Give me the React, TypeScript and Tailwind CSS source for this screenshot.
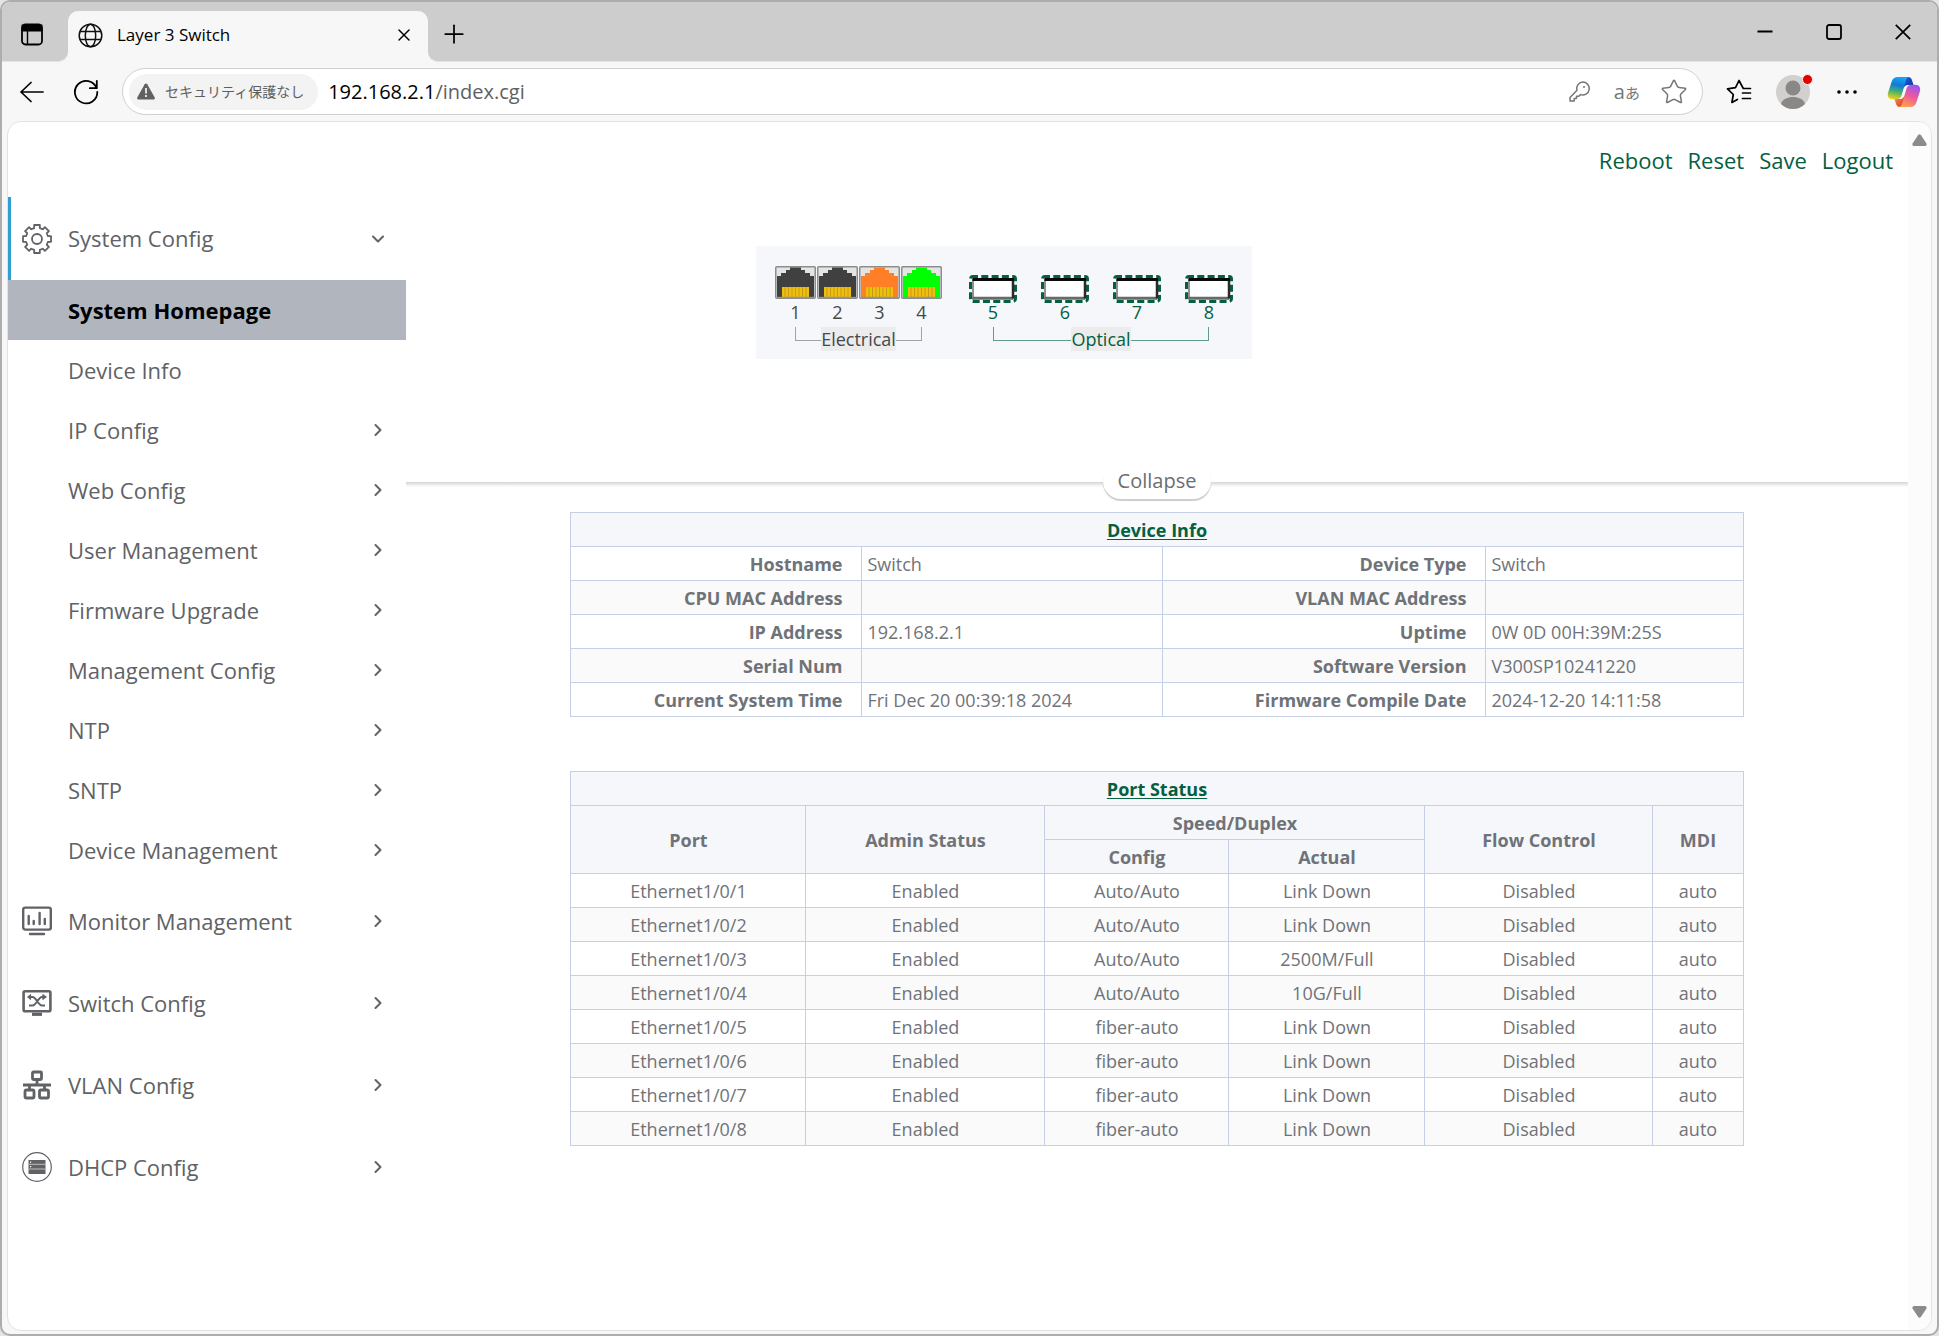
import React from "react";
import { ChevronDown, ChevronRight, Plus, Star, X } from "lucide-react";

const GearIcon = () => {
  const points: string[] = [];
  for (let i = 0; i < 8; i++) {
    const a = (i * Math.PI) / 4 - Math.PI / 2;
    const at = (r: number, d: number) =>
      `${(15 + r * Math.cos(a + d)).toFixed(2)},${(15 + r * Math.sin(a + d)).toFixed(2)}`;
    points.push(at(11.3, -0.25), at(14.3, -0.2), at(14.3, 0.2), at(11.3, 0.25));
  }
  return (
    <svg width="30" height="30" viewBox="0 0 30 30" fill="none" stroke="currentColor" strokeWidth="1.8" strokeLinejoin="round">
      <polygon points={points.join(" ")} />
      <circle cx="15" cy="15" r="5" />
    </svg>
  );
};

const MonitorIcon = () => (
  <svg width="30" height="30" viewBox="0 0 30 30" fill="none" stroke="currentColor" strokeWidth="2.4" strokeLinecap="round">
    <rect x="1.2" y="1.6" width="27.6" height="22" rx="2" />
    <path d="M6.7 10v8M11.7 15v3M17.6 7v11M22.8 13v5M8 28h14" />
  </svg>
);

const SwitchIcon = () => (
  <svg width="30" height="30" viewBox="0 0 30 30" fill="none" stroke="currentColor" strokeWidth="2">
    <rect x="1.6" y="3.2" width="26.8" height="20" rx="1.5" strokeWidth="2.6" />
    <path d="M10 26.3h10" strokeWidth="3.2" />
    <path d="M7 9h3.5c4 0 5.500 8.500 9.500 8.500h3M7 17.500h3.500c4 0 5.500-8.500 9.500-8.500h2" />
    <path d="M20.500 6.500 24 9l-3.500 2.500M9 6.500 6 9l3 2.500" strokeWidth="1.200" fill="currentColor" />
  </svg>
);

const VlanIcon = () => (
  <svg width="30" height="30" viewBox="0 0 30 30" fill="none" stroke="currentColor" strokeWidth="2.800">
    <rect x="10.500" y="2" width="9" height="7.500" rx="1" />
    <path d="M15 9.500v5M1 15h28M7.500 15v5M22.500 15v5" />
    <rect x="3" y="20" width="9" height="8" rx="1.500" />
    <rect x="17.500" y="20" width="9" height="8" rx="1.500" />
  </svg>
);

const DhcpIcon = () => (
  <svg width="30" height="30" viewBox="0 0 30 30" fill="none">
    <circle cx="15" cy="15" r="14.300" stroke="currentColor" strokeWidth="1.200" />
    <path d="M6.500 8h17v14h-17z" fill="currentColor" />
    <path d="M6.500 12.300h17M6.500 17h17" stroke="#c9c9c9" strokeWidth="0.900" />
    <path d="M8 10.200h1.200M8 14.700h1.200" stroke="#ffffff" strokeWidth="1.200" />
  </svg>
);

const CopilotIcon = () => (
  <svg width="34" height="32" viewBox="0 0 34 32">
    <defs>
      <linearGradient id="cpA" x1="0.500" y1="0" x2="0.300" y2="1">
        <stop offset="0" stopColor="#18a6ee" />
        <stop offset="0.350" stopColor="#1279dc" />
        <stop offset="0.650" stopColor="#45b36b" />
        <stop offset="1" stopColor="#f3d01c" />
      </linearGradient>
      <linearGradient id="cpB" x1="0.700" y1="0" x2="0.300" y2="1">
        <stop offset="0" stopColor="#9b55f0" />
        <stop offset="0.500" stopColor="#ee5a9c" />
        <stop offset="1" stopColor="#ffa24a" />
      </linearGradient>
      <linearGradient id="cpC" x1="0" y1="0" x2="1" y2="1">
        <stop offset="0" stopColor="#1b5fd8" />
        <stop offset="1" stopColor="#1134a8" />
      </linearGradient>
      <linearGradient id="cpD" x1="0" y1="0" x2="1" y2="1">
        <stop offset="0" stopColor="#f8a23a" />
        <stop offset="1" stopColor="#d92c3c" />
      </linearGradient>
    </defs>
    <path d="M17 1h4c2.500 0 3.500 1.500 4.100 3.500L26.500 9H21c-2.500 0-3.800 1.500-4.500 4z" fill="url(#cpC)" />
    <path d="M17 31h-4c-2.500 0-3.500-1.500-4.100-3.500L7.500 23H13c2.500 0 3.800-1.500 4.500-4z" fill="url(#cpD)" />
    <path d="M11 1h11c-1.800.5-2.700 2-3.300 4l-4.200 14.500C13.700 22 12 23.300 9.500 23.300H5.500C1.500 23.300 0 20 1.200 16.200L4.500 6C5.600 2.700 7.500 1 11 1z" fill="url(#cpA)" />
    <path d="M23 31H12c1.800-.5 2.700-2 3.300-4l4.200-14.500C20.300 10 22 8.700 24.500 8.700h4C32.500 8.700 34 12 32.800 15.800L29.500 26C28.400 29.300 26.500 31 23 31z" fill="url(#cpB)" />
  </svg>
);

const JackIcon = ({ fill }: { fill: string }) => (
  <svg width="41" height="33" viewBox="0 0 41 33">
    <rect x="0.750" y="0.750" width="39.500" height="31.500" rx="1" fill="#e4e4e4" stroke="#8d8d90" strokeWidth="1.500" />
    <path d="M2 31V10h4V7h5V4h4V1.500h11V4h4v3h5v3h4v21z" fill={fill} />
    <path d="M7 21h27v10H7z" fill="#edc010" />
    <path d="M10 21v10M13.500 21v10M17 21v10M20.500 21v10M24 21v10M27.500 21v10M31 21v10" stroke="#c99a10" strokeWidth="1" />
    <path d="M2 31.300h37" stroke="#8d8d90" />
  </svg>
);

const SfpIcon = () => (
  <svg width="48" height="28" viewBox="0 0 48 28" fill="none">
    <rect x="1.500" y="1.500" width="45" height="25" rx="2.500" stroke="#04603f" strokeWidth="3" strokeDasharray="7 3.300" strokeDashoffset="2" />
    <rect x="3" y="3" width="42" height="22" rx="1" fill="#ffffff" />
    <path d="M4 3.500v21" stroke="#6d6d6d" strokeWidth="1.500" />
    <path d="M3.500 23.300h41" stroke="#6a6a6a" strokeWidth="3" />
    <path d="M44 3.500v20" stroke="#2a2a2a" strokeWidth="2.500" />
    <path d="M3.500 4.500h41.500" stroke="#0a0a0a" strokeWidth="3" />
  </svg>
);

const subItems = [
  "System Homepage",
  "Device Info",
  "IP Config",
  "Web Config",
  "User Management",
  "Firmware Upgrade",
  "Management Config",
  "NTP",
  "SNTP",
  "Device Management",
];

const sections = [
  { label: "Monitor Management", icon: <MonitorIcon /> },
  { label: "Switch Config", icon: <SwitchIcon /> },
  { label: "VLAN Config", icon: <VlanIcon /> },
  { label: "DHCP Config", icon: <DhcpIcon /> },
];

const deviceRows = [
  ["Hostname", "Switch", "Device Type", "Switch"],
  ["CPU MAC Address", "", "VLAN MAC Address", ""],
  ["IP Address", "192.168.2.1", "Uptime", "0W 0D 00H:39M:25S"],
  ["Serial Num", "", "Software Version", "V300SP10241220"],
  ["Current System Time", "Fri Dec 20 00:39:18 2024", "Firmware Compile Date", "2024-12-20 14:11:58"],
];

const portRows = [
  ["Auto/Auto", "Link Down"],
  ["Auto/Auto", "Link Down"],
  ["Auto/Auto", "2500M/Full"],
  ["Auto/Auto", "10G/Full"],
  ["fiber-auto", "Link Down"],
  ["fiber-auto", "Link Down"],
  ["fiber-auto", "Link Down"],
  ["fiber-auto", "Link Down"],
].map(([config, actual], i) => [`Ethernet1/0/${i + 1}`, "Enabled", config, actual, "Disabled", "auto"]);

const jackColors = ["#404040", "#404040", "#ff7f27", "#00ff00"];

function TitleBar() {
  return (
    <div className="flex h-[60px] shrink-0">
      <div className="flex w-[66px] items-center rounded-br-[10px] border-b border-[#e2e2e2] bg-[#cdcdcd] pt-[6px] pl-[19px]">
        <button aria-label="Tab actions">
          <svg width="22" height="23" viewBox="0 0 22 23" fill="none" stroke="#000" strokeWidth="1.800">
            <rect x="1" y="1.500" width="20" height="20" rx="3.500" />
            <path d="M1.500 2.500h19v5h-19z" fill="#000" />
            <path d="M6.500 7v14" strokeWidth="1.400" />
          </svg>
        </button>
      </div>
      <div className="w-[360px] bg-[#cdcdcd] pt-[9px]">
        <div className="flex h-full items-center rounded-t-[10px] bg-[#f7f7f7] pr-[14px] pb-[3px] pl-[10px]">
          <svg width="25" height="25" viewBox="0 0 25 25" fill="none" stroke="#111" strokeWidth="1.500">
            <circle cx="12.500" cy="12.500" r="11.300" />
            <ellipse cx="12.500" cy="12.500" rx="5.200" ry="11.300" />
            <path d="M2 8.500h21M2 16.500h21" />
          </svg>
          <span className="ml-[14px] flex-1 text-[17px] text-black">Layer 3 Switch</span>
          <button aria-label="Close tab">
            <X size={20} strokeWidth={1.800} color="#000" />
          </button>
        </div>
      </div>
      <div className="flex flex-1 items-center rounded-bl-[10px] border-b border-[#e2e2e2] bg-[#cdcdcd] pr-[26px] pl-[11px]">
        <button aria-label="New tab" className="mt-[4px] mr-auto">
          <Plus size={30} strokeWidth={1.400} color="#000" />
        </button>
        <div className="flex items-center gap-[53px]">
          <button aria-label="Minimize">
            <svg width="16" height="16" viewBox="0 0 16 16" stroke="#000" strokeWidth="1.800">
              <path d="M0.500 7.500h15" />
            </svg>
          </button>
          <button aria-label="Maximize">
            <svg width="16" height="16" viewBox="0 0 16 16" fill="none" stroke="#000" strokeWidth="1.800">
              <rect x="1" y="1" width="14" height="14" rx="2" />
            </svg>
          </button>
          <button aria-label="Close window">
            <svg width="16" height="16" viewBox="0 0 16 16" stroke="#000" strokeWidth="1.800">
              <path d="M0.800 0.800 15.200 15.200M15.200 0.800 0.800 15.200" />
            </svg>
          </button>
        </div>
      </div>
    </div>
  );
}

function Toolbar() {
  return (
    <div className="flex h-[59px] shrink-0 items-center pr-[16px] pl-[18px]">
      <button aria-label="Back">
        <svg width="24" height="22" viewBox="0 0 24 22" fill="none" stroke="#000" strokeWidth="1.700" strokeLinecap="round" strokeLinejoin="round">
          <path d="M11 1.500 1 11l10 9.500M1 11h22" />
        </svg>
      </button>
      <button aria-label="Refresh" className="ml-[29px]">
        <svg width="26" height="26" viewBox="0 0 26 26" fill="none" stroke="#000" strokeWidth="1.800" strokeLinecap="round" strokeLinejoin="round">
          <path d="M23.500 9A11.200 11.200 0 1 0 24.300 13M23.800 2v7.200h-7" />
        </svg>
      </button>
      <div className="ml-[23px] flex h-[47px] flex-1 items-center rounded-full border border-[#cfcfcf] bg-white pr-[14px] pl-[6px]">
        <button className="flex h-[36px] items-center gap-[10px] rounded-full bg-[#f3f3f3] pr-[14px] pl-[8px] text-[14px] text-[#5e5e5e]">
          <svg width="18" height="17" viewBox="0 0 18 17">
            <path d="M9 0.500c.6 0 1 .3 1.300.8l7.300 13c.6 1.100 0 2.200-1.200 2.200H1.600C.4 16.500-.2 15.400.4 14.300l7.300-13C8 .8 8.400.5 9 .5z" fill="#616161" />
            <path d="M9 5v5.500" stroke="#fff" strokeWidth="1.600" />
            <circle cx="9" cy="13" r="1.100" fill="#fff" />
          </svg>
          <span>セキュリティ保護なし</span>
        </button>
        <button className="mr-auto ml-[10px] text-[20px] text-[#5f5f5f]">
          <span className="text-black">192.168.2.1</span>/index.cgi
        </button>
        <button aria-label="Passwords">
          <svg width="21" height="21" viewBox="0 0 21 21" fill="none" stroke="#767676" strokeWidth="1.500" strokeLinejoin="round">
            <path d="M13.500 1a6.500 6.500 0 1 1-2 12.600L9.800 15.300H7.500v2.300H5.200V20H1v-3.600l7-7.200A6.500 6.500 0 0 1 13.500 1z" />
            <circle cx="15" cy="6" r="1" fill="#767676" stroke="none" />
          </svg>
        </button>
        <button aria-label="Translate" className="ml-[24px] text-[#767676]">
          <span className="text-[20px]">a</span>
          <span className="text-[15px]">あ</span>
        </button>
        <button aria-label="Add to favorites" className="ml-[20px]">
          <Star size={28} strokeWidth={1.300} color="#767676" />
        </button>
      </div>
      <button aria-label="Favorites" className="ml-[23px]">
        <svg width="26" height="25" viewBox="0 0 26 25" fill="none" stroke="#000" strokeWidth="1.700" strokeLinejoin="round" strokeLinecap="round">
          <path d="M24.500 9.500h-7.200L13 1.500 9.500 8.700 1.500 9.800l5.800 5.700-1.400 8 5.500-3M16.500 14h8M16.500 19.500h8" />
        </svg>
      </button>
      <button aria-label="Profile" className="relative ml-[24px]">
        <svg width="34" height="34" viewBox="0 0 34 34">
          <circle cx="17" cy="17" r="17" fill="#d2d0ce" />
          <circle cx="17" cy="13" r="7.500" fill="#8a8886" />
          <path d="M5 29c1.500-5 6.500-7 12-7s10.500 2 12 7a17 17 0 0 1-24 0z" fill="#8a8886" />
        </svg>
        <span className="absolute -top-px -right-[3px] size-[11px] rounded-full border border-[#f7f7f7] bg-[#e60000]" />
      </button>
      <button aria-label="Settings and more" className="ml-[27px]">
        <svg width="20" height="20" viewBox="0 0 20 20">
          <circle cx="2" cy="10" r="1.800" />
          <circle cx="10" cy="10" r="1.800" />
          <circle cx="18" cy="10" r="1.800" />
        </svg>
      </button>
      <button aria-label="Copilot" className="ml-[30px]">
        <CopilotIcon />
      </button>
    </div>
  );
}

function Sidebar() {
  return (
    <nav className="w-[398px] shrink-0 text-[22px] text-[#606266]">
      <button className="flex h-[83px] w-full items-center border-l-[3px] border-[#2e9fd0] pr-[18px] pl-[11px]">
        <GearIcon />
        <span className="ml-[16px] flex-1 text-left">System Config</span>
        <ChevronDown size={20} strokeWidth={2.400} />
      </button>
      <ul>
        {subItems.map((item, i) => (
          <li key={item}>
            <a
              href="#"
              className={
                i === 0
                  ? "flex h-[60px] items-center bg-[#b1b6be] pr-[18px] pl-[60px] font-bold text-black"
                  : "flex h-[60px] items-center pr-[18px] pl-[60px]"
              }
            >
              <span className="flex-1">{item}</span>
              {i > 1 && <ChevronRight size={20} strokeWidth={2.400} />}
            </a>
          </li>
        ))}
      </ul>
      {sections.map((s) => (
        <button key={s.label} className="flex h-[82px] w-full items-center pr-[18px] pl-[14px]">
          {s.icon}
          <span className="ml-[16px] flex-1 text-left">{s.label}</span>
          <ChevronRight size={20} strokeWidth={2.400} />
        </button>
      ))}
    </nav>
  );
}

function PortPanel() {
  return (
    <div className="ml-[350px] flex w-[496px] items-end justify-between bg-[#f5f7fb] px-[19px] pt-[20px] pb-[8px] text-[18px]">
      <div className="text-[#45484d]">
        <div className="flex gap-px">
          {jackColors.map((c, i) => (
            <button key={i} className="flex flex-col items-center">
              <JackIcon fill={c} />
              <span className="mt-[4px] leading-[18px]">{i + 1}</span>
            </button>
          ))}
        </div>
        <div className="mx-[20px] mt-[6px] flex">
          <div className="h-[14px] flex-1 border-b border-l border-[#a0a3a8]" />
          <span className="bg-[#ececec] leading-[24px]">Electrical</span>
          <div className="h-[14px] flex-1 border-r border-b border-[#a0a3a8]" />
        </div>
      </div>
      <div className="text-[#04603f]">
        <div className="flex gap-[24px]">
          {[5, 6, 7, 8].map((n) => (
            <button key={n} className="flex flex-col items-center">
              <SfpIcon />
              <span className="leading-[18px]">{n}</span>
            </button>
          ))}
        </div>
        <div className="mx-[24px] mt-[6px] flex">
          <div className="h-[14px] flex-1 border-b border-l border-[#5f9c83]" />
          <span className="bg-[#ececec] leading-[24px]">Optical</span>
          <div className="h-[14px] flex-1 border-r border-b border-[#5f9c83]" />
        </div>
      </div>
    </div>
  );
}

const cell = "h-[34px] border border-[#c5d0e6] p-0";

function DeviceTable() {
  return (
    <table className="w-[78%] table-fixed border-collapse text-[18px] leading-[24px] text-[#6f7378]">
      <colgroup>
        <col className="w-[291px]" />
        <col className="w-[301px]" />
        <col className="w-[323px]" />
        <col className="w-[257px]" />
      </colgroup>
      <thead>
        <tr className="bg-[#f5f7fb]">
          <th colSpan={4} className={cell}>
            <a href="#" className="font-bold text-[#04603f] underline underline-offset-2">Device Info</a>
          </th>
        </tr>
      </thead>
      <tbody>
        {deviceRows.map((r) => (
          <tr key={r[0]} className="even:bg-[#fafafa]">
            {r.map((v, i) =>
              i % 2 === 0 ? (
                <th key={i} scope="row" className="h-[34px] border border-[#c5d0e6] py-0 pr-[19px] text-right font-bold">{v}</th>
              ) : (
                <td key={i} className="h-[34px] border border-[#c5d0e6] py-0 pl-[5px]">{v}</td>
              ),
            )}
          </tr>
        ))}
      </tbody>
    </table>
  );
}

function PortTable() {
  return (
    <table className="w-[78%] table-fixed border-collapse text-center text-[18px] leading-[24px] text-[#6f7378]">
      <colgroup>
        <col className="w-[235px]" />
        <col className="w-[239px]" />
        <col className="w-[184px]" />
        <col className="w-[196px]" />
        <col className="w-[228px]" />
        <col className="w-[90px]" />
      </colgroup>
      <thead className="bg-[#f5f7fb]">
        <tr>
          <th colSpan={6} className={cell}>
            <a href="#" className="font-bold text-[#04603f] underline underline-offset-2">Port Status</a>
          </th>
        </tr>
        <tr>
          <th rowSpan={2} className={cell}>Port</th>
          <th rowSpan={2} className={cell}>Admin Status</th>
          <th colSpan={2} className={cell}>Speed/Duplex</th>
          <th rowSpan={2} className={cell}>Flow Control</th>
          <th rowSpan={2} className={cell}>MDI</th>
        </tr>
        <tr>
          <th className={cell}>Config</th>
          <th className={cell}>Actual</th>
        </tr>
      </thead>
      <tbody>
        {portRows.map((r) => (
          <tr key={r[0]} className="even:bg-[#fafafa]">
            {r.map((v, i) => (
              <td key={i} className={cell}>{v}</td>
            ))}
          </tr>
        ))}
      </tbody>
    </table>
  );
}

export default function App() {
  return (
    <div className="min-h-screen bg-[#e4e4e4] font-['Open_Sans','Noto_Sans_CJK_JP',sans-serif]">
      <div className="flex min-h-screen flex-col overflow-hidden rounded-[10px] border-2 border-[#adadad] bg-[#f7f7f7]">
        <TitleBar />
        <Toolbar />
        <div className="mx-[5px] mb-[3px] flex flex-1 overflow-hidden rounded-[14px] border border-[#e2e2e2] bg-white">
          <div className="min-w-0 flex-1">
            <header className="flex h-[75px] justify-end gap-[15px] pt-[23px] pr-[15px] text-[22px] leading-[30px] text-[#04603f]">
              <a href="#">Reboot</a>
              <a href="#">Reset</a>
              <a href="#">Save</a>
              <a href="#">Logout</a>
            </header>
            <div className="flex">
              <Sidebar />
              <main className="min-w-0 flex-1">
                <section className="h-[285px] pt-[49px]">
                  <PortPanel />
                </section>
                <div className="h-[5px] bg-linear-to-b from-[#d6d6d6] to-white" />
                <div className="-mt-[24px] flex flex-col items-center">
                  <button className="relative h-[36px] rounded-full bg-white px-[15px] text-[20px] leading-[30px] text-[#6a6e73] shadow-[0_2px_1px_rgba(0,0,0,0.2)]">
                    Collapse
                  </button>
                  <div className="mt-[13px] flex w-full justify-center">
                    <DeviceTable />
                  </div>
                  <div className="mt-[54px] flex w-full justify-center">
                    <PortTable />
                  </div>
                </div>
              </main>
            </div>
          </div>
          <div className="flex w-[23px] flex-col items-center justify-between bg-[#fcfcfc] py-[12px]">
            <button aria-label="Scroll up">
              <svg width="15" height="12" viewBox="0 0 15 12">
                <path d="M6 1.200Q7.500-.5 9 1.200l5.500 8.300Q15 12 13 12H2Q0 12 .5 9.500z" fill="#8b8b8b" />
              </svg>
            </button>
            <button aria-label="Scroll down">
              <svg width="15" height="12" viewBox="0 0 15 12">
                <path d="M6 10.800Q7.500 12.500 9 10.800l5.500-8.300Q15 0 13 0H2Q0 0 .5 2.500z" fill="#8b8b8b" />
              </svg>
            </button>
          </div>
        </div>
      </div>
    </div>
  );
}
